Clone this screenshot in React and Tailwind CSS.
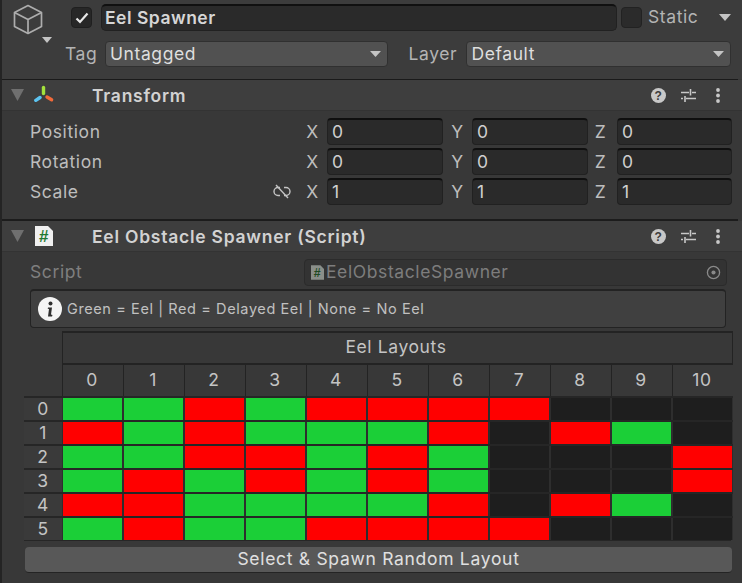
const F = { fontFamily: '"Inter", "Liberation Sans", sans-serif' };

const LAYOUT = [
  "GGRGRRRRNNN",
  "RGRGGGRNRGN",
  "GGRRGRGNNNR",
  "GRGRGRGNNNR",
  "RRGGGGRNRGN",
  "GRGGRRRRNNN",
];

function Tri({ className, color = "#c4c4c4" }) {
  return (
    <svg viewBox="0 0 12 7" preserveAspectRatio="none" className={className}>
      <path d="M0 0H12L6 7Z" fill={color} />
    </svg>
  );
}

function Cube() {
  return (
    <svg viewBox="0 0 30 31" className="w-[30px] h-[31px] shrink-0" fill="none" stroke="#adadad" strokeWidth="1.7" strokeLinejoin="round">
      <path d="M15 1.5 28.5 8.5V22.5L15 29.5 1.5 22.5V8.5Z" />
      <path d="M1.5 8.5 15 15.5 28.5 8.5M15 15.5V29.5" />
    </svg>
  );
}

function Check() {
  return (
    <svg viewBox="0 0 14 12" className="w-[14px] h-[12px]" fill="none" stroke="#e8e8e8" strokeWidth="2.2">
      <path d="M1.5 6.5 5 10 12.5 1.5" />
    </svg>
  );
}

function Dropdown({ label, className }) {
  return (
    <div className={`h-[26px] rounded-[4px] bg-[#515151] border border-[#303030] flex items-center justify-between pl-[4px] pr-[6px] text-[#dedede] ${className}`}>
      <span className="pt-[1px]">{label}</span>
      <Tri className="w-[11px] h-[6px]" />
    </div>
  );
}

function TransformIcon() {
  return (
    <svg viewBox="0 0 20 20" className="w-[20px] h-[20px]" fill="none" strokeWidth="3.4" strokeLinecap="round">
      <path d="M9.5 2.5V8.5" stroke="#a4e23c" />
      <path d="M6 12.5 1.8 15.3" stroke="#5cc3f0" />
      <path d="M13 12 17.6 14.8" stroke="#f26a3a" />
    </svg>
  );
}

function ScriptIcon({ small }) {
  return (
    <svg viewBox="0 0 18 20" className={small ? "w-[13px] h-[15px]" : "w-[18px] h-[20px]"}>
      <path d="M0 0H13L18 5V20H0Z" fill={small ? "#8a8f8a" : "#f0f0f0"} />
      <text x="9" y="16" textAnchor="middle" fontSize="17" fontWeight="700" fill={small ? "#1f4a24" : "#1f7a30"} fontFamily="Liberation Sans, sans-serif">#</text>
    </svg>
  );
}

function HeaderIcons() {
  return (
    <div className="ml-auto flex items-center">
      <svg viewBox="0 0 15 15" className="w-[15px] h-[15px]">
        <circle cx="7.5" cy="7.5" r="7.5" fill="#c8c8c8" />
        <text x="7.5" y="12" textAnchor="middle" fontSize="12" fontWeight="700" fill="#3c3c3c" fontFamily="Liberation Sans, sans-serif">?</text>
      </svg>
      <svg viewBox="0 0 15 15" className="w-[15px] h-[15px] ml-[15px]" stroke="#c8c8c8" fill="none" strokeWidth="1.6">
        <path d="M0 4.5H8M11 4.5H15M9.5 1V7.5M0 10.5H2M5 10.5H15M4 8V14" />
      </svg>
      <svg viewBox="0 0 6 15" className="w-[6px] h-[15px] ml-[19px] mr-[21px]" fill="#c8c8c8">
        <circle cx="3" cy="2" r="1.9" />
        <circle cx="3" cy="7.5" r="1.9" />
        <circle cx="3" cy="13" r="1.9" />
      </svg>
    </div>
  );
}

function ComponentHeader({ icon, title, className }) {
  return (
    <div className={`h-[30px] bg-[#3e3e3e] flex items-center font-semibold text-[#d2d2d2] ${className}`}>
      <Tri className="w-[13px] h-[12px] ml-[9px]" color="#6f6f6f" />
      <div className="w-[20px] ml-[10px] flex justify-center">{icon}</div>
      <span className="ml-[38px] pt-[2px] text-[17.5px] tracking-[0.75px]">{title}</span>
      <HeaderIcons />
    </div>
  );
}

function VecField({ axis, value, axisW, inputW }) {
  return (
    <div className="flex items-center">
      <span className={`${axisW} text-[#bdbdbd] text-center pt-[1px]`}>{axis}</span>
      <div className={`${inputW} h-[27px] rounded-[4px] bg-[#2a2a2a] border border-[#212121] border-t-[#0f0f0f] border-t-2 flex items-center pl-[4px] text-[#d0d0d0]`}>
        {value}
      </div>
    </div>
  );
}

function VecRow({ label, value, link }) {
  return (
    <div className="h-[27px] flex items-center">
      <span className="w-[240px] text-[#bdbdbd] pt-[1px]">{label}</span>
      <div className="w-[36px] flex justify-end pr-[15px]">
        {link && (
          <svg viewBox="0 0 18 15" className="w-[18px] h-[15px]" fill="none" stroke="#c4c4c4" strokeWidth="1.4">
            <path d="M7 3.5H5A4 4 0 0 0 5 11.5H7M11 3.5H13A4 4 0 0 1 13 11.5H11" />
            <path d="M3 1 15 14" />
          </svg>
        )}
      </div>
      <VecField axis="X" value={value} axisW="w-[21px] pr-[8px]" inputW="w-[116px]" />
      <VecField axis="Y" value={value} axisW="w-[29px]" inputW="w-[116px]" />
      <VecField axis="Z" value={value} axisW="w-[29px] pr-[4px]" inputW="w-[115px]" />
    </div>
  );
}

function Cell({ type }) {
  const bg = type === "G" ? "bg-[#1bcf37]" : type === "R" ? "bg-[#ff0000]" : "bg-[#1e1e1e]";
  return <div className={`${bg} w-[59px] h-[22px]`} />;
}

export default function App() {
  const cols = Array.from({ length: 11 }, (_, i) => i);
  return (
    <div style={F} className="w-[742px] h-[583px] overflow-hidden bg-[#383838] border-l-2 border-[#242424] text-[17.5px] tracking-[0.6px] flex flex-col">
      <div className="h-[79px] bg-[#3c3c3c] pr-[11px] pt-[4px] shrink-0">
        <div className="flex h-[27px] items-center">
          <div className="w-[69px] pl-[11px] pt-[4px] shrink-0"><Cube /></div>
          <div className="w-[21px] h-[21px] rounded-[4px] bg-[#272727] border border-[#1f1f1f] flex items-center justify-center shrink-0">
            <Check />
          </div>
          <div className="ml-[9px] w-[516px] h-[27px] rounded-[5px] bg-[#2a2a2a] border border-[#212121] border-t-2 border-t-[#101010] pl-[3px] flex items-center font-semibold text-[#d6d6d6] text-[17.5px] tracking-[0.5px]">
            Eel Spawner
          </div>
          <div className="ml-[4px] w-[21px] h-[21px] rounded-[4px] bg-[#2b2b2b] border border-[#222222] shrink-0" />
          <span className="ml-[6px] text-[#b4b4b4]">Static</span>
          <Tri className="w-[12px] h-[7px] ml-auto" />
        </div>
        <div className="flex items-center h-[26px] mt-[10px] relative">
          <Tri className="w-[10px] h-[6px] absolute left-[40px] top-[-4px]" />
          <span className="ml-[63px] w-[40px] text-[#b4b4b4] pt-[1px]">Tag</span>
          <Dropdown label="Untagged" className="w-[283px]" />
          <span className="ml-[21px] w-[58px] text-[#b4b4b4] pt-[1px]">Layer</span>
          <Dropdown label="Default" className="w-[265px]" />
        </div>
      </div>

      <div className="h-[1px] bg-[#1a1a1a] shrink-0 mr-[4px]" />
      <ComponentHeader icon={<TransformIcon />} title="Transform" className="shrink-0" />
      <div className="h-[109px] shrink-0 pl-[28px] pt-[7px] flex flex-col gap-[3px] border-t border-[#333333]">
        <VecRow label="Position" value="0" />
        <VecRow label="Rotation" value="0" />
        <VecRow label="Scale" value="1" link />
      </div>

      <div className="h-[2px] bg-[#1c1c1c] shrink-0 mr-[4px]" />
      <ComponentHeader icon={<ScriptIcon />} title="Eel Obstacle Spawner (Script)" className="shrink-0" />

      <div className="flex flex-col border-t border-[#333333]">
        <div className="flex items-center h-[27px] mt-[7px]">
          <span className="ml-[28px] w-[274px] text-[#7f7f7f]">Script</span>
          <div className="w-[423px] h-[27px] rounded-[4px] bg-[#333333] border border-[#2b2b2b] flex items-center pl-[6px] gap-[2px] text-[#7d7d7d]">
            <ScriptIcon small />
            <span>EelObstacleSpawner</span>
            <svg viewBox="0 0 16 16" className="w-[15px] h-[15px] ml-auto mr-[5px]" fill="none" stroke="#8a8a8a" strokeWidth="1.4">
              <circle cx="8" cy="8" r="6.5" />
              <circle cx="8" cy="8" r="2.2" fill="#8a8a8a" stroke="none" />
            </svg>
          </div>
        </div>

        <div className="ml-[28px] mt-[3px] w-[696px] h-[39px] rounded-[4px] bg-[#404040] border border-[#232323] border-t-2 flex items-center pl-[7px] gap-[5px] text-[14.5px] text-[#c0c0c0] tracking-[0.6px]">
          <svg viewBox="0 0 24 24" className="w-[24px] h-[24px] shrink-0">
            <circle cx="12" cy="12" r="12" fill="#f4f4f4" />
            <circle cx="12.5" cy="6.5" r="2" fill="#2f2f2f" />
            <path d="M10 10.5H14L13 17.5 14.5 18 14 19.5H10L11 12 9.7 11.7Z" fill="#2f2f2f" />
          </svg>
          <span className="pb-[1px]">Green = Eel | Red = Delayed Eel | None = No Eel</span>
        </div>

        <div className="ml-[22px] mt-[3px] grid grid-cols-[38px_repeat(11,61px)] w-[709px] text-[#c4c4c4]">
          <div />
          <div className="col-span-11 h-[34px] bg-[#383838] border-t-2 border-b-2 border-l border-r border-[#232323] flex items-center justify-center pr-[3px] pb-[1px]">
            Eel Layouts
          </div>
          <div />
          {cols.map((c) => (
            <div key={c} className="h-[31px] border-l border-[#232323] flex items-center justify-center pr-[2px] bg-[#383838] last:border-r">
              {c}
            </div>
          ))}
          {LAYOUT.map((row, r) => (
            <div key={r} className="contents">
              <div className="h-[24px] bg-[#3a3a3a] border-t-2 border-[#262626] flex items-center justify-center">{r}</div>
              {row.split("").map((t, c) => (
                <div key={c} className="h-[24px] bg-[#2e2e2e] border-t-2 border-[#262626] pl-[1px]">
                  <Cell type={t} />
                </div>
              ))}
            </div>
          ))}
          <div className="col-span-12 h-[1px] bg-[#262626] mr-[2px]" />
        </div>

        <div className="ml-[23px] mt-[6px] w-[707px] h-[26px] rounded-[4px] bg-[#585858] border-b border-[#242424] flex items-center justify-center text-[#e0e0e0] tracking-[0.7px]">
          Select &amp; Spawn Random Layout
        </div>
      </div>
    </div>
  );
}
